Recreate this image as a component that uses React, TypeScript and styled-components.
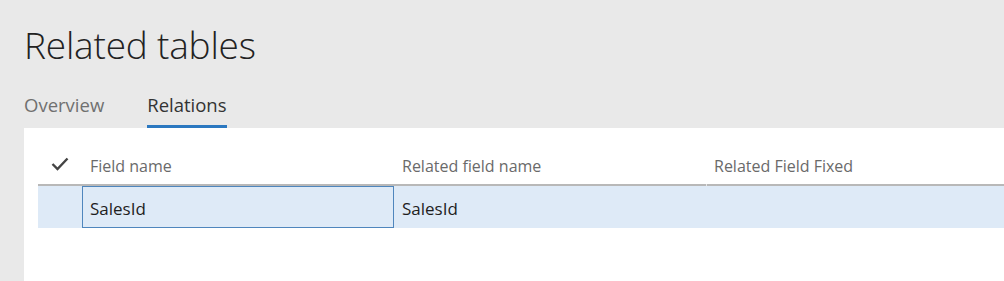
import React from "react";
import styled, { createGlobalStyle } from "styled-components";

const Global = createGlobalStyle`
  html, body { margin: 0; padding: 0; }
  body { background: #e9e9e9; font-family: "Segoe UI", "Open Sans", "Noto Sans", sans-serif; }
`;

const Page = styled.div`
  width: 1004px;
  height: 281px;
  background: #e9e9e9;
  display: flex;
  flex-direction: column;
  padding-left: 24px;
  box-sizing: border-box;
  overflow: hidden;
`;

const Title = styled.h1`
  margin: 21px 0 0 0;
  font-size: 37px;
  font-weight: 300;
  line-height: 48px;
  color: #222;
  letter-spacing: -0.2px;
`;

const Tabs = styled.div`
  display: flex;
  gap: 43px;
  margin-top: 21px;
  height: 38px;
`;

const Tab = styled.div<{ $active?: boolean }>`
  font-size: 18.5px;
  line-height: 24px;
  color: ${(p) => (p.$active ? "#333" : "#707070")};
  border-bottom: 3px solid ${(p) => (p.$active ? "#2b78c0" : "transparent")};
  padding-top: 3px;
  box-sizing: border-box;
  height: 38px;
`;

const Panel = styled.div`
  flex: 1;
  background: #fff;
  padding-left: 14px;
`;

const Grid = styled.div`
  display: grid;
  grid-template-columns: 44px 312px 312px 1fr;
`;

const HeadCell = styled.div<{ $sep?: boolean }>`
  height: 58px;
  box-sizing: border-box;
  border-bottom: 2px solid #b8b8b8;
  display: flex;
  align-items: flex-end;
  padding: 0 8px 7px 8px;
  font-size: 16px;
  line-height: 22px;
  color: #6a6a6a;
  position: relative;
  ${(p) =>
    p.$sep
      ? `&::before { content: ""; position: absolute; left: 0; bottom: -2px; width: 1px; height: 2px; background: #e6e6e6; }`
      : ""}
`;

const CheckHead = styled(HeadCell)`
  padding: 0 0 13px 13px;
`;

const Cell = styled.div<{ $focus?: boolean }>`
  height: 42px;
  box-sizing: border-box;
  background: #deeaf7;
  border: 1px solid ${(p) => (p.$focus ? "#4f86bd" : "transparent")};
  display: flex;
  align-items: center;
  padding: 2px 7px 0 7px;
  font-size: 17px;
  color: #1e1e1e;
`;

const Check = () => (
  <svg width="18" height="14" viewBox="0 0 18 14">
    <polyline points="1.5,7 6.5,12 16.5,1.5" fill="none" stroke="#444" strokeWidth="2.4" />
  </svg>
);

export default function App() {
  return (
    <>
      <Global />
      <Page>
        <Title>Related tables</Title>
        <Tabs>
          <Tab>Overview</Tab>
          <Tab $active>Relations</Tab>
        </Tabs>
        <Panel>
          <Grid>
            <CheckHead>
              <Check />
            </CheckHead>
            <HeadCell>Field name</HeadCell>
            <HeadCell>Related field name</HeadCell>
            <HeadCell $sep>Related Field Fixed</HeadCell>
            <Cell />
            <Cell $focus>SalesId</Cell>
            <Cell>SalesId</Cell>
            <Cell />
          </Grid>
        </Panel>
      </Page>
    </>
  );
}
